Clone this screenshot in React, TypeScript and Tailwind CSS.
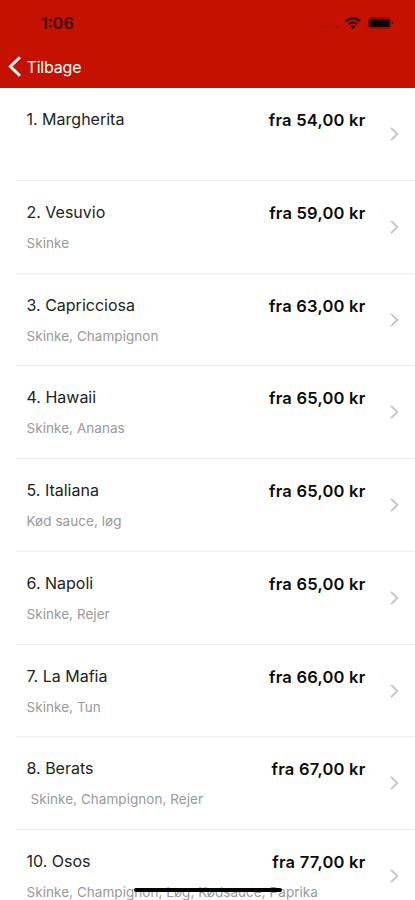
import React from 'react';

interface Pizza {
  name: string;
  toppings: string;
  price: string;
  indent?: boolean;
}

const pizzas: Pizza[] = [
  { name: '1. Margherita', toppings: '', price: '54,00' },
  { name: '2. Vesuvio', toppings: 'Skinke', price: '59,00' },
  { name: '3. Capricciosa', toppings: 'Skinke, Champignon', price: '63,00' },
  { name: '4. Hawaii', toppings: 'Skinke, Ananas', price: '65,00' },
  { name: '5. Italiana', toppings: 'Kød sauce, løg', price: '65,00' },
  { name: '6. Napoli', toppings: 'Skinke, Rejer', price: '65,00' },
  { name: '7. La Mafia', toppings: 'Skinke, Tun', price: '66,00' },
  { name: '8. Berats', toppings: 'Skinke, Champignon, Rejer', price: '67,00', indent: true },
  { name: '10. Osos', toppings: 'Skinke, Champignon, Løg, Kødsauce, Paprika', price: '77,00' },
];

const StatusBar = () => (
  <div className="flex h-[46px] items-center justify-between pl-[41px] pr-[21px] text-[#3a0502]">
    <span className="text-[16px] leading-5 font-semibold">1:06</span>
    <div className="flex items-center">
      <div className="mt-[7px] mr-[6px] flex gap-[2px]">
        {[0, 1, 2, 3].map((i) => (
          <span key={i} className="h-[2px] w-[3px] rounded-full bg-[#a80f06]" />
        ))}
      </div>
      <svg width="16" height="12" viewBox="0 0 16 12" fill="none" stroke="#240201" strokeWidth="2.1">
        <path d="M1 4.2a10 10 0 0 1 14 0" />
        <path d="M3.7 7.2a6.1 6.1 0 0 1 8.6 0" />
        <path d="M8 12 5.6 9.4a3.5 3.5 0 0 1 4.8 0z" fill="#240201" stroke="none" />
      </svg>
      <svg className="ml-[7px]" width="26" height="12" viewBox="0 0 26 12">
        <rect x="0.5" y="0.5" width="22" height="10.5" rx="2.5" fill="none" stroke="#7d0c05" />
        <rect x="1.5" y="1.7" width="20" height="8.2" rx="1.2" fill="#140000" />
        <path d="M23.8 4v4q1.4-.6 1.4-2t-1.4-2z" fill="#7d0c05" />
      </svg>
    </div>
  </div>
);

const PizzaRow: React.FC<{ pizza: Pizza }> = ({ pizza }) => (
  <li className="ml-4 flex h-[92.72px] shrink-0 border-b border-[#ececec] pr-4 pl-[10.5px]">
    <div className="min-w-0 flex-1 whitespace-nowrap">
      <div className="flex justify-between pt-[20px]">
        <span className="text-[16px] leading-[22px] text-[#222]">{pizza.name}</span>
        <span className="pt-px text-[16.5px] leading-[22px] font-semibold tracking-[0.23px] text-[#0b0b0b]">
          fra {pizza.price} kr
        </span>
      </div>
      <p className={`mt-[10px] text-[13.5px] leading-[18px] tracking-[0.05px] text-[#999] ${pizza.indent ? 'pl-1' : ''}`}>
        {pizza.toppings}
      </p>
    </div>
    <svg className="mt-[38px] ml-[24.5px] shrink-0" width="9" height="16" viewBox="0 0 9 16" fill="none" stroke="#c4c4c7" strokeWidth="1.8">
      <path d="m1 1.8 6.4 6.2L1 14.2" />
    </svg>
  </li>
);

export default function App() {
  return (
    <div className="relative flex h-[900px] w-[415px] flex-col overflow-hidden bg-white font-['Inter',sans-serif]">
      <header className="h-[88.2px] shrink-0 bg-[#c51200]">
        <StatusBar />
        <button className="flex h-10 items-center pl-[8px] text-white">
          <svg width="13" height="21" viewBox="0 0 13 21" fill="none" stroke="currentColor" strokeWidth="2.9">
            <path d="M11.9 1.2 2.4 10.5l9.5 9.3" />
          </svg>
          <span className="mt-px ml-[5.5px] text-[16px] leading-5 tracking-[-0.2px]">Tilbage</span>
        </button>
      </header>
      <ul className="flex flex-col">
        {pizzas.map((pizza) => (
          <PizzaRow key={pizza.name} pizza={pizza} />
        ))}
      </ul>
      {/* home indicator */}
      <div className="absolute bottom-2 left-[134px] h-1 w-[148px] rounded-full bg-black" />
    </div>
  );
}
